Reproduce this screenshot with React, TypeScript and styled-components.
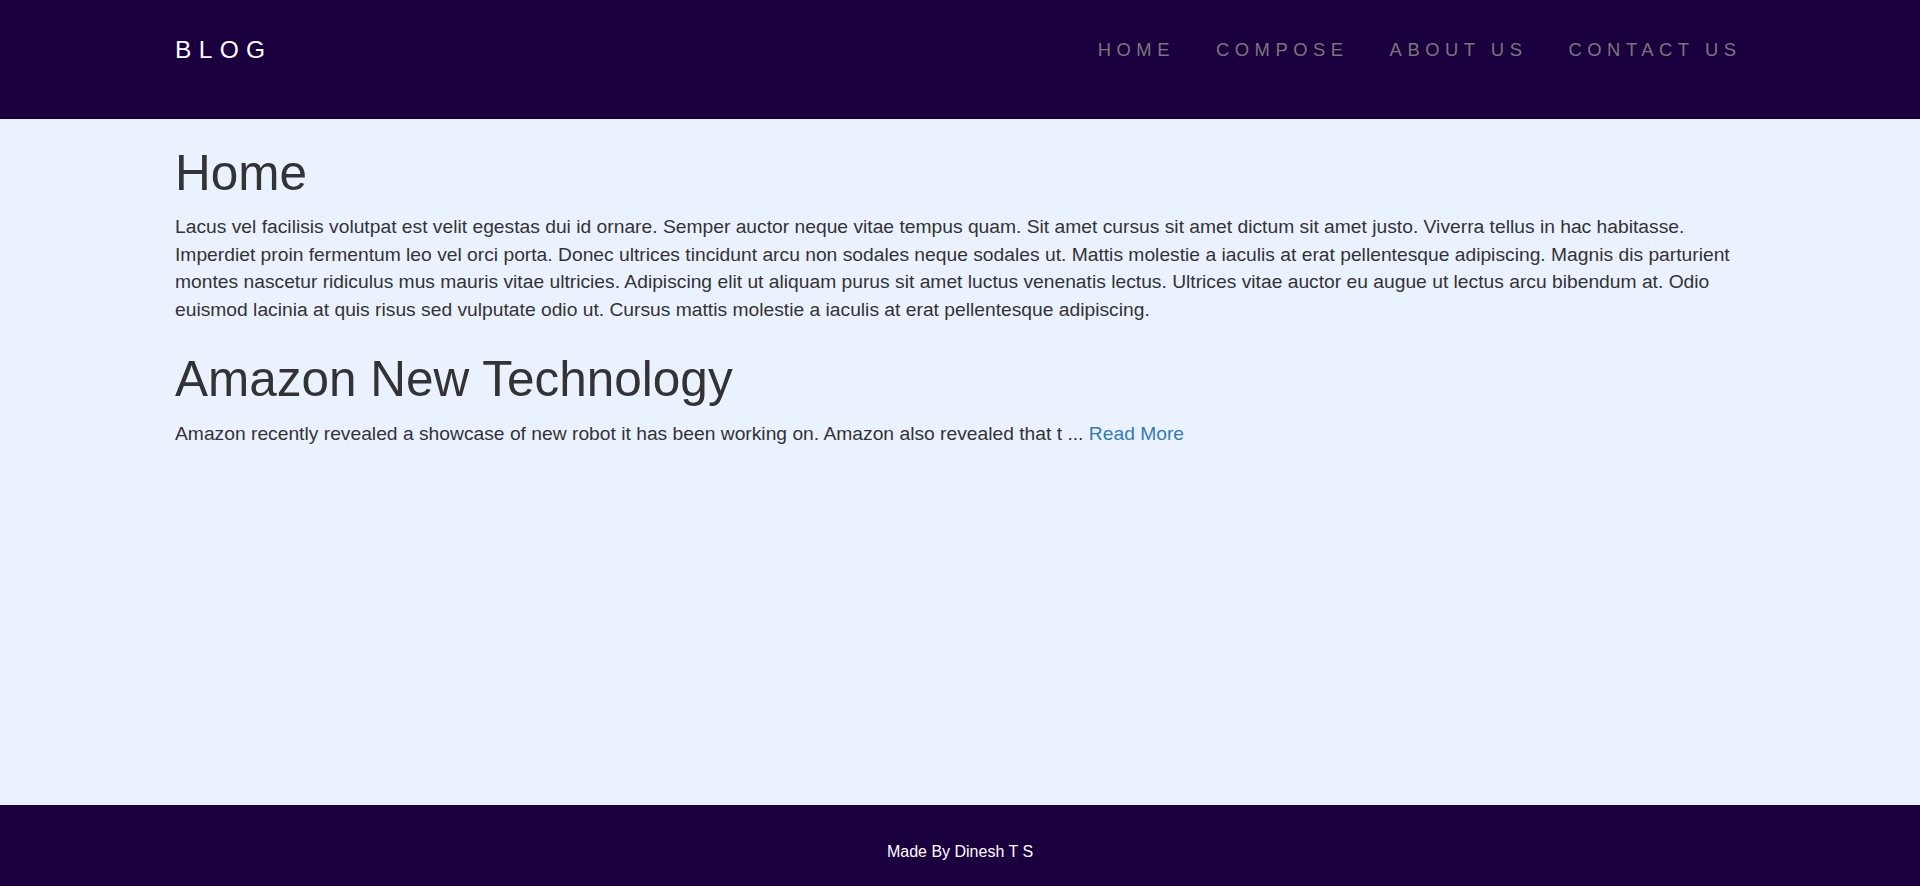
import React from "react";
import styled, { createGlobalStyle } from "styled-components";

const Global = createGlobalStyle`
  html, body { margin: 0; padding: 0; }
  body {
    background: #ebf2ff;
    font-family: "Liberation Sans", Arial, Helvetica, sans-serif;
    color: #333;
  }
  * { box-sizing: border-box; }
`;

const Page = styled.div`
  min-height: 886px;
  display: flex;
  flex-direction: column;
`;

const Header = styled.header`
  background: #1a003f;
  height: 119px;
`;

const Container = styled.div`
  max-width: 1600px;
  margin: 0 auto;
  padding: 0 15px;
`;

const NavRow = styled(Container)`
  display: flex;
  align-items: center;
  justify-content: space-between;
  height: 98px;
`;

const Brand = styled.a`
  color: #fff;
  font-size: 24.5px;
  line-height: 25px;
  letter-spacing: 0.3em;
  text-decoration: none;
`;

const NavList = styled.ul`
  display: flex;
  list-style: none;
  margin: 0 -17px 0 0;
  padding: 0;
`;

const NavLink = styled.a`
  display: block;
  padding: 0 20.5px;
  color: #777;
  font-size: 18.4px;
  line-height: 19px;
  letter-spacing: 0.3em;
  text-decoration: none;
`;

const Main = styled(Container)`
  flex: 1;
  width: 100%;
  padding-top: 27px;
`;

const Title = styled.h1`
  font-size: 49.5px;
  font-weight: 400;
  line-height: 1.1;
  margin: 0 0 13px;
`;

const Post = styled.section`
  & + & {
    margin-top: 29px;
  }
`;

const Text = styled.p`
  font-size: 19.25px;
  line-height: 1.42857;
  margin: 0;
`;

const More = styled.a`
  color: #337ab7;
  text-decoration: none;
`;

const Footer = styled.footer`
  background: #1a003f;
  height: 81px;
  display: flex;
  align-items: center;
  justify-content: center;
  padding-top: 12px;
  color: #fff;
  font-size: 16px;
`;

export default function App() {
  return (
    <Page>
      <Global />
      <Header>
        <NavRow>
          <Brand href="#">BLOG</Brand>
          <NavList>
            <li><NavLink href="#">HOME</NavLink></li>
            <li><NavLink href="#">COMPOSE</NavLink></li>
            <li><NavLink href="#">ABOUT US</NavLink></li>
            <li><NavLink href="#">CONTACT US</NavLink></li>
          </NavList>
        </NavRow>
      </Header>
      <Main as="main">
        <Post>
          <Title>Home</Title>
          <Text>
            Lacus vel facilisis volutpat est velit egestas dui id ornare. Semper auctor neque vitae tempus quam. Sit amet cursus sit amet dictum sit amet justo. Viverra tellus in hac habitasse. Imperdiet proin fermentum leo vel orci porta. Donec ultrices tincidunt arcu non sodales neque sodales ut. Mattis molestie a iaculis at erat pellentesque adipiscing. Magnis dis parturient montes nascetur ridiculus mus mauris vitae ultricies. Adipiscing elit ut aliquam purus sit amet luctus venenatis lectus. Ultrices vitae auctor eu augue ut lectus arcu bibendum at. Odio euismod lacinia at quis risus sed vulputate odio ut. Cursus mattis molestie a iaculis at erat pellentesque adipiscing.
          </Text>
        </Post>
        <Post>
          <Title>Amazon New Technology</Title>
          <Text>
            Amazon recently revealed a showcase of new robot it has been working on. Amazon also revealed that t ... <More href="#">Read More</More>
          </Text>
        </Post>
      </Main>
      <Footer>Made By Dinesh T S</Footer>
    </Page>
  );
}
